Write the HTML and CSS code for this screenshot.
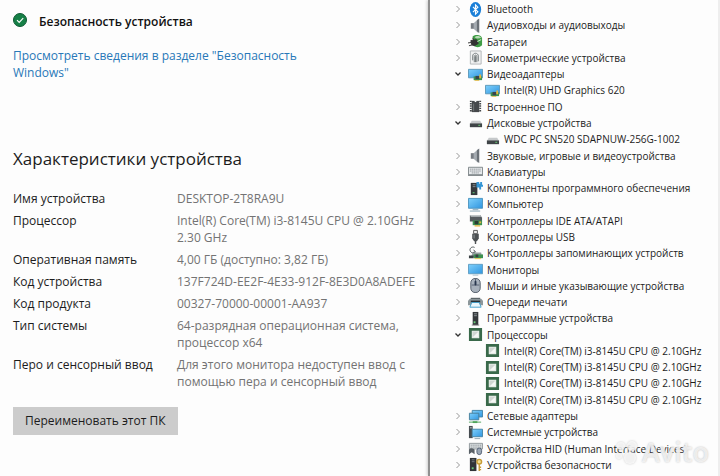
FILE: index.html
```html
<!DOCTYPE html>
<html lang="ru">
<head>
  <meta charset="UTF-8" />
  <meta name="viewport" content="width=device-width, initial-scale=1.0" />
  <title>О системе</title>
  <link rel="stylesheet" href="styles.css">
</head>
<body>
  <!-- Иконки дерева устройств -->
  <svg class="sprite" aria-hidden="true">
    <defs>
      <linearGradient id="screen" x1="0" y1="0" x2="1" y2="1">
        <stop offset="0" stop-color="#7fd0fb" />
        <stop offset="1" stop-color="#2f95e0" />
      </linearGradient>
    </defs>
    <symbol id="bluetooth" viewBox="0 0 16 16">
      <ellipse cx="8" cy="8" rx="6" ry="8" fill="#1a7fd8" />
      <path d="M5.300 5.200l5.200 5.300L8 13V3l2.500 2.500-5.200 5.300" fill="none" stroke="#fff" stroke-width="1.200" />
    </symbol>
    <symbol id="sound" viewBox="0 0 16 16">
      <path d="M3 5.500h4v6H3z" fill="#777c82" />
      <path d="M6 5.500L11 1v15l-5-4.500z" fill="#a5abb1" />
      <path d="M9.500 2.500L12 .5v15.500l-2.500-2z" fill="#6b7177" />
    </symbol>
    <symbol id="battery" viewBox="0 0 16 16">
      <path d="M5 2.500c4-3 10-1 10 2.500v7c-3 3-7 2.500-9 0z" fill="#3f9c45" />
      <path d="M7 3.500c2-2 6-1.500 7 .5-2 1-5 1.500-7-.5z" fill="#b9d9b5" />
      <path d="M3 7l6-1 2 4-4 2.500-3-1zM0 9.500l4-.5M5 4l1 3M1 12.500l4-1" fill="#333" stroke="#333" />
      <path d="M10 8l4-2" stroke="#d9efd4" />
    </symbol>
    <symbol id="biometric" viewBox="0 0 16 16">
      <path d="M2.500 1h11.500v14H2.500z" fill="#f1f2f2" stroke="#b1b5b7" />
      <path d="M5 11V6.500c0-4 6-4 6 0V12M6.700 13V7c0-2 2.700-2 2.700 0v6M8 6.500V13" fill="none" stroke="#707779" />
    </symbol>
    <symbol id="display" viewBox="0 0 16 16">
      <path d="M.5 2.500h15v9H.5z" fill="url(#screen)" stroke="#5c97b9" />
      <path d="M6 10h9v4H6z" fill="#3d9150" />
      <path d="M8 9.500h4V13H8z" fill="#39444b" />
      <path d="M12 8h2v4h-2zM7 14h5v1H7z" fill="#e3b53c" />
    </symbol>
    <symbol id="firmware" viewBox="0 0 16 16">
      <path d="M4 2h8v12H4z" fill="#45484b" />
      <path d="M2 2.500h2M2 5h2M2 7.500h2M2 10h2M2 12.500h2M12 2.500h2M12 5h2M12 7.500h2M12 10h2M12 12.500h2" stroke="#45484b" stroke-width="1.500" />
      <path d="M6 1.500h4l-2 2z" fill="#fff" />
      <path d="M6 5v8" stroke="#73777a" />
    </symbol>
    <symbol id="disk" viewBox="0 0 16 16">
      <path d="M4 6h9l2 3.500H2z" fill="#c6c9cb" />
      <path d="M2 9h13v4H2z" fill="#3f4447" />
      <path d="M11 11h2" stroke="#67cf75" />
    </symbol>
    <symbol id="keyboard" viewBox="0 0 16 16">
      <path d="M.5 3.500h15v8H.5z" fill="#e6e9eb" stroke="#7e8589" />
      <path d="M2 5.500h12M2 7.500h12M4 9.500h8" stroke="#92989c" stroke-dasharray="1.500 .5" />
      <path d="M0 12h16" stroke="#646b6f" />
    </symbol>
    <symbol id="component" viewBox="0 0 16 16">
      <path d="M3 2h7v13H3z" fill="#35393c" />
      <path d="M5 4h3M5 6h3" stroke="#899095" />
      <path d="M5 12h2v1H5z" fill="#63d37b" />
      <path d="M9 1h3v2h1V1h2v3h1v2h-2v3h-2V7H9z" fill="#3495d4" />
    </symbol>
    <symbol id="computer" viewBox="0 0 16 16">
      <path d="M.5 1.500h15v10.500H.5z" fill="url(#screen)" stroke="#4d94bf" />
      <path d="M5 13.500h6M2 15h11" stroke="#86a4b5" />
    </symbol>
    <symbol id="ide" viewBox="0 0 16 16">
      <path d="M2 2h11l2 3v4H2z" fill="#565c60" />
      <path d="M2 2h11l1 2H3z" fill="#bfc5c7" />
      <path d="M5 8h10v5H5z" fill="#3d9150" />
      <path d="M7 8.500h4V12H7z" fill="#283c33" />
      <path d="M12 9h2v2h-2zM7 13h6v1.500H7z" fill="#e3b53c" />
    </symbol>
    <symbol id="usb" viewBox="0 0 16 16">
      <path d="M6 1.500h4V5H6z" fill="#eee" stroke="#555" />
      <path d="M4.500 5h7v5l-2 3h-3l-2-3z" fill="#4c5053" />
      <path d="M8 12v4" stroke="#4c5053" stroke-width="1.500" />
      <path d="M6.500 6v4" stroke="#8e9599" />
    </symbol>
    <symbol id="storage" viewBox="0 0 16 16">
      <path d="M7 1.500C4 0 1 3 2.500 5.500S6 8 7 6.500M6 4l2 2.500L5 7" fill="none" stroke="#454d50" />
      <path d="M5 7h9l1 5H3z" fill="#949d9e" />
      <path d="M6 9h10v4H6z" fill="#3d9150" />
      <path d="M1 10h5v3H1zM8 9h3v3H8z" fill="#383f42" />
      <path d="M7 13h7v1H7z" fill="#e3c04a" />
    </symbol>
    <symbol id="monitor" viewBox="0 0 16 16">
      <path d="M.5 2.500h15v10H.5z" fill="url(#screen)" stroke="#5e9dc2" />
      <path d="M5 14h6" stroke="#a8bdc9" />
    </symbol>
    <symbol id="mouse" viewBox="0 0 16 16">
      <rect x="3" y=".5" width="10" height="15" rx="4.500" fill="#a7b0bb" stroke="#535d6a" />
      <path d="M4 7.500h8M8 1v6" stroke="#566172" />
      <rect x="7" y="3" width="2" height="5" rx="1" fill="#28364d" />
    </symbol>
    <symbol id="printer" viewBox="0 0 16 16">
      <path d="M3 3h10v3H3z" fill="#4c5458" />
      <path d="M0 6l2-2h12l2 2v5H0z" fill="#8d979b" />
      <path d="M3 6h10v2H3z" fill="#272f33" />
      <path d="M4 8h8l2 5H2z" fill="#e9f6fc" stroke="#429fcc" />
    </symbol>
    <symbol id="software" viewBox="0 0 16 16">
      <path d="M5 1h6v14H5z" fill="#34383b" />
      <path d="M6.500 3h3M6.500 5h3" stroke="#8e9599" />
      <path d="M6 11h2v2H6z" fill="#69cb79" />
      <path d="M4 15h8" stroke="#777" />
    </symbol>
    <symbol id="cpu" viewBox="0 0 16 16">
      <path d="M2.500 2.500h11v11h-11z" fill="#e7eee8" stroke="#39694a" stroke-width="3" />
      <path d="M5 5h6v6H5z" fill="#d0d6d2" />
      <path d="M5 11l6-6v6z" fill="#f5f7f5" />
    </symbol>
    <symbol id="network" viewBox="0 0 16 16">
      <path d="M4.500 1.500h11v7h-11z" fill="url(#screen)" stroke="#4383a5" />
      <path d="M1.500 4.500h10v7h-10z" fill="url(#screen)" stroke="#477f9b" />
      <path d="M5 13h5v2H5z" fill="#4fa45b" />
      <path d="M1 14h13" stroke="#4fa45b" />
    </symbol>
    <symbol id="system" viewBox="0 0 16 16">
      <path d="M1 1h4v13H1z" fill="#464d51" />
      <path d="M2 3h2" stroke="#c2cbd0" />
      <path d="M4.500 4.500h11v8h-11z" fill="url(#screen)" stroke="#4383a5" />
      <path d="M7 14.500h6" stroke="#91a5af" />
    </symbol>
    <symbol id="hid" viewBox="0 0 16 16">
      <path d="M1.500 2.500h14v6h-14z" fill="#d5dadc" stroke="#91989c" />
      <path d="M3 4.500h11M3 6.500h11" stroke="#858d91" stroke-dasharray="1 1" />
      <path d="M1 14V9c2-2 4-1 6 0v5l-3-2z" fill="#596066" />
      <rect x="9.500" y="7.500" width="5" height="7" rx="2.500" fill="#9ba7b5" stroke="#536073" />
    </symbol>
    <symbol id="security" viewBox="0 0 16 16">
      <path d="M2 1h7v14H2z" fill="#303438" />
      <path d="M4 3h3M4 5h3" stroke="#778086" />
      <path d="M4 11h2v2H4z" fill="#65ca78" />
      <circle cx="12" cy="5" r="2.500" fill="#f2df91" stroke="#c69b36" stroke-width="1.500" />
      <path d="M12 7.500V15M12 11h2M12 13.500h2" stroke="#c69b36" stroke-width="1.500" />
    </symbol>
    <symbol id="closed" viewBox="0 0 8 8">
      <path d="M2.500 1L5.500 4l-3 3" fill="none" stroke="#999" />
    </symbol>
    <symbol id="open" viewBox="0 0 8 8">
      <path d="M1.500 2.500L4 5l2.500-2.500" fill="none" stroke="#333" stroke-width="1.300" />
    </symbol>
  </svg>

  <div class="screen">
    <main class="about">
      <div class="status">
        <svg class="check" viewBox="0 0 14 14" aria-hidden="true">
          <circle cx="7" cy="7" r="6.500" fill="#168047" stroke="#0f5933" />
          <path d="M4 7.200l2.200 2.200 4-4.200" fill="none" stroke="#fff" stroke-width="1.200" />
        </svg>
        <strong>Безопасность устройства</strong>
      </div>
      <a class="link" href="#">Просмотреть сведения в разделе "Безопасность Windows"</a>

      <h1>Характеристики устройства</h1>
      <dl class="specs">
        <dt>Имя устройства</dt>
        <dd>DESKTOP-2T8RA9U</dd>
        <dt>Процессор</dt>
        <dd>Intel(R) Core(TM) i3-8145U CPU @ 2.10GHz<br>2.30 GHz</dd>
        <dt>Оперативная память</dt>
        <dd>4,00 ГБ (доступно: 3,82 ГБ)</dd>
        <dt>Код устройства</dt>
        <dd>137F724D-EE2F-4E33-912F-8E3D0A8ADEFE</dd>
        <dt>Код продукта</dt>
        <dd>00327-70000-00001-AA937</dd>
        <dt>Тип системы</dt>
        <dd>64-разрядная операционная система,<br>процессор x64</dd>
        <dt>Перо и сенсорный ввод</dt>
        <dd>Для этого монитора недоступен ввод с<br>помощью пера и сенсорный ввод</dd>
      </dl>
      <button class="rename" type="button">Переименовать этот ПК</button>
    </main>

    <aside class="devices">
      <ul class="tree">
        <li><svg class="arrow"><use href="#closed" /></svg><svg class="icon"><use href="#bluetooth" /></svg>Bluetooth</li>
        <li><svg class="arrow"><use href="#closed" /></svg><svg class="icon"><use href="#sound" /></svg>Аудиовходы и аудиовыходы</li>
        <li><svg class="arrow"><use href="#closed" /></svg><svg class="icon"><use href="#battery" /></svg>Батареи</li>
        <li><svg class="arrow"><use href="#closed" /></svg><svg class="icon"><use href="#biometric" /></svg>Биометрические устройства</li>
        <li><svg class="arrow"><use href="#open" /></svg><svg class="icon"><use href="#display" /></svg>Видеоадаптеры</li>
        <li class="child"><svg class="icon"><use href="#display" /></svg>Intel(R) UHD Graphics 620</li>
        <li><svg class="arrow"><use href="#closed" /></svg><svg class="icon"><use href="#firmware" /></svg>Встроенное ПО</li>
        <li><svg class="arrow"><use href="#open" /></svg><svg class="icon"><use href="#disk" /></svg>Дисковые устройства</li>
        <li class="child"><svg class="icon"><use href="#disk" /></svg>WDC PC SN520 SDAPNUW-256G-1002</li>
        <li><svg class="arrow"><use href="#closed" /></svg><svg class="icon"><use href="#sound" /></svg>Звуковые, игровые и видеоустройства</li>
        <li><svg class="arrow"><use href="#closed" /></svg><svg class="icon"><use href="#keyboard" /></svg>Клавиатуры</li>
        <li><svg class="arrow"><use href="#closed" /></svg><svg class="icon"><use href="#component" /></svg>Компоненты программного обеспечения</li>
        <li><svg class="arrow"><use href="#closed" /></svg><svg class="icon"><use href="#computer" /></svg>Компьютер</li>
        <li><svg class="arrow"><use href="#closed" /></svg><svg class="icon"><use href="#ide" /></svg>Контроллеры IDE ATA/ATAPI</li>
        <li><svg class="arrow"><use href="#closed" /></svg><svg class="icon"><use href="#usb" /></svg>Контроллеры USB</li>
        <li><svg class="arrow"><use href="#closed" /></svg><svg class="icon"><use href="#storage" /></svg>Контроллеры запоминающих устройств</li>
        <li><svg class="arrow"><use href="#closed" /></svg><svg class="icon"><use href="#monitor" /></svg>Мониторы</li>
        <li><svg class="arrow"><use href="#closed" /></svg><svg class="icon"><use href="#mouse" /></svg>Мыши и иные указывающие устройства</li>
        <li><svg class="arrow"><use href="#closed" /></svg><svg class="icon"><use href="#printer" /></svg>Очереди печати</li>
        <li><svg class="arrow"><use href="#closed" /></svg><svg class="icon"><use href="#software" /></svg>Программные устройства</li>
        <li><svg class="arrow"><use href="#open" /></svg><svg class="icon"><use href="#cpu" /></svg>Процессоры</li>
        <li class="child"><svg class="icon"><use href="#cpu" /></svg>Intel(R) Core(TM) i3-8145U CPU @ 2.10GHz</li>
        <li class="child"><svg class="icon"><use href="#cpu" /></svg>Intel(R) Core(TM) i3-8145U CPU @ 2.10GHz</li>
        <li class="child"><svg class="icon"><use href="#cpu" /></svg>Intel(R) Core(TM) i3-8145U CPU @ 2.10GHz</li>
        <li class="child"><svg class="icon"><use href="#cpu" /></svg>Intel(R) Core(TM) i3-8145U CPU @ 2.10GHz</li>
        <li><svg class="arrow"><use href="#closed" /></svg><svg class="icon"><use href="#network" /></svg>Сетевые адаптеры</li>
        <li><svg class="arrow"><use href="#closed" /></svg><svg class="icon"><use href="#system" /></svg>Системные устройства</li>
        <li><svg class="arrow"><use href="#closed" /></svg><svg class="icon"><use href="#hid" /></svg>Устройства HID (Human Interface Devices)</li>
        <li><svg class="arrow"><use href="#closed" /></svg><svg class="icon"><use href="#security" /></svg>Устройства безопасности</li>
      </ul>
    </aside>
  </div>

  <div class="watermark">
    <svg class="dots" viewBox="0 0 26 26" aria-hidden="true">
      <circle cx="8" cy="7" r="4" />
      <circle cx="19" cy="7" r="5" />
      <circle cx="6" cy="17" r="3" />
      <circle cx="17" cy="19" r="6" />
    </svg>
    Avito
  </div>
</body>
</html>
```
FILE: styles.css
```css
* {
  box-sizing: border-box;
}

body {
  margin: 0;
  font-family: "Open Sans", "Noto Sans", sans-serif;
  font-size: 12px;
  line-height: 17px;
  color: #1c1c1c;
  background: #fdfdfd;
}

.sprite {
  position: absolute;
  width: 0;
  height: 0;
}

.screen {
  display: grid;
  grid-template-columns: 107fr 73fr;
  min-height: 100vh;
}

/* О СИСТЕМЕ */
.about {
  padding: 13px 0 0 13px;
}

.status {
  display: flex;
  align-items: flex-start;
  gap: 12px;
  margin-bottom: 17px;
}

.status strong {
  font-weight: 600;
  color: #111;
}

.check {
  width: 14px;
  height: 14px;
}

.link {
  display: block;
  max-width: 300px;
  color: #2878b8;
  text-decoration: none;
}

h1 {
  margin: 66px 0 19px;
  font-size: 17px;
  line-height: 24px;
  font-weight: 400;
}

.specs {
  display: grid;
  grid-template-columns: 164px 1fr;
  row-gap: 5px;
  margin: 0;
  white-space: nowrap;
}

.specs dd {
  margin: 0;
  color: #737373;
}

.rename {
  margin-top: 17px;
  padding: 5px 12px 6px;
  border: none;
  font: inherit;
  color: inherit;
  background: #ccc;
}

/* ДИСПЕТЧЕР УСТРОЙСТВ */
.devices {
  border-left: 2px solid #909090;
  border-right: 2px solid #eee;
  box-shadow: -1px 0 3px #ccc;
}

.tree {
  display: flex;
  flex-direction: column;
  justify-content: space-between;
  height: 100%;
  margin: 0;
  padding: 1px 0 3px 24px;
  list-style: none;
  font-size: 10px;
  line-height: 16px;
  white-space: nowrap;
}

.tree li {
  display: flex;
  align-items: center;
}

.tree .child {
  padding-left: 31px;
}

.arrow {
  width: 8px;
  height: 8px;
  margin-right: 6px;
}

.icon {
  width: 15px;
  height: 15px;
  margin-right: 4px;
}

.watermark {
  position: absolute;
  right: 11px;
  bottom: 8px;
  display: flex;
  align-items: center;
  gap: 3px;
  font-size: 27px;
  line-height: 32px;
  font-weight: 600;
  color: rgba(255, 255, 255, 0.7);
  text-shadow: 0 0 2px #bbb;
}

.dots {
  width: 26px;
  height: 26px;
  fill: rgba(255, 255, 255, 0.7);
  filter: drop-shadow(0 0 1px #bbb);
}
```
